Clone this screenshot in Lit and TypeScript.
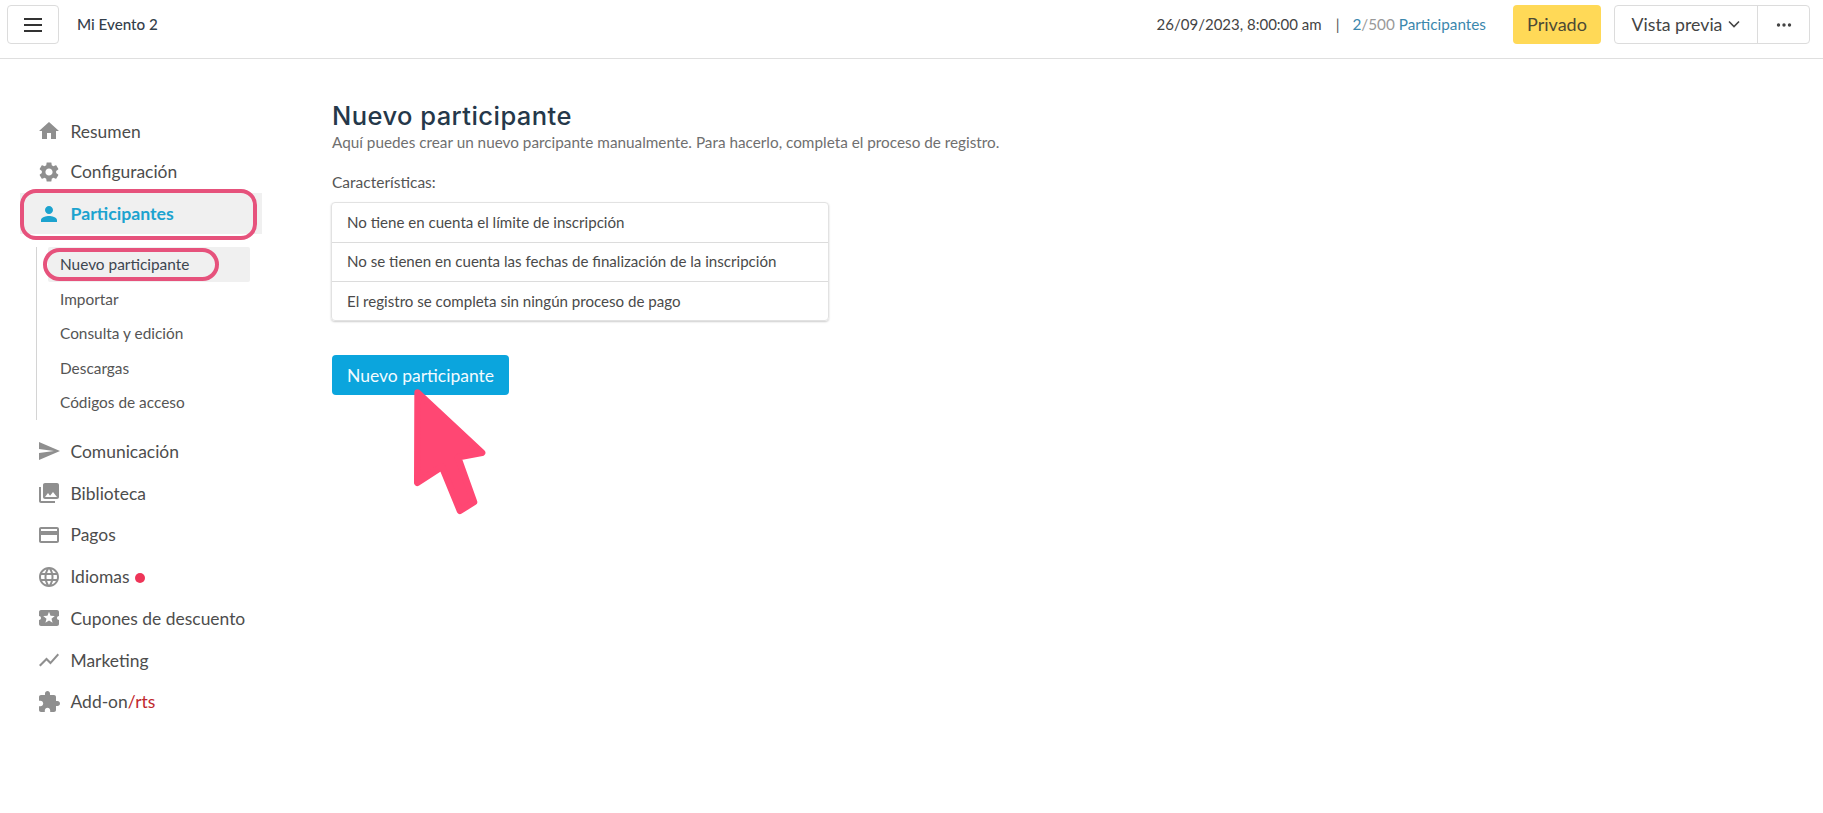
import { LitElement, html, css, svg } from "lit";
import { customElement } from "lit/decorators.js";

const ICONS: Record<string, string> = {
  home: "M10 20v-6h4v6h5v-8h3L12 3 2 12h3v8z",
  settings: "M19.14 12.94c.04-.3.06-.61.06-.94 0-.32-.02-.64-.07-.94l2.03-1.58c.18-.14.23-.41.12-.61l-1.92-3.32c-.12-.22-.37-.29-.59-.22l-2.39.96c-.5-.38-1.03-.7-1.62-.94l-.36-2.54c-.04-.24-.24-.41-.48-.41h-3.84c-.24 0-.43.17-.47.41l-.36 2.54c-.59.24-1.13.57-1.62.94l-2.39-.96c-.22-.08-.47 0-.59.22L2.74 8.87c-.12.21-.08.47.12.61l2.03 1.58c-.05.3-.09.63-.09.94s.02.64.07.94l-2.03 1.58c-.18.14-.23.41-.12.61l1.92 3.32c.12.22.37.29.59.22l2.39-.96c.5.38 1.03.7 1.62.94l.36 2.54c.05.24.24.41.48.41h3.84c.24 0 .44-.17.47-.41l.36-2.54c.59-.24 1.13-.56 1.62-.94l2.39.96c.22.08.47 0 .59-.22l1.92-3.32c.12-.22.07-.47-.12-.61l-2.01-1.58zM12 15.6c-1.98 0-3.6-1.62-3.6-3.6s1.62-3.6 3.6-3.6 3.6 1.62 3.6 3.6-1.62 3.6-3.6 3.6z",
  person: "M12 12c2.21 0 4-1.79 4-4s-1.79-4-4-4-4 1.79-4 4 1.79 4 4 4zm0 2c-2.67 0-8 1.34-8 4v2h16v-2c0-2.66-5.33-4-8-4z",
  send: "M2.01 21L23 12 2.01 3 2 10l15 2-15 2z",
  library: "M22 16V4c0-1.1-.9-2-2-2H8c-1.1 0-2 .9-2 2v12c0 1.1.9 2 2 2h12c1.1 0 2-.9 2-2zm-11-4l2.03 2.71L16 11l4 5H8l3-4zM2 6v14c0 1.1.9 2 2 2h14v-2H4V6H2z",
  card: "M20 4H4c-1.11 0-1.99.89-1.99 2L2 18c0 1.11.89 2 2 2h16c1.11 0 2-.89 2-2V6c0-1.11-.89-2-2-2zm0 14H4v-6h16v6zm0-10H4V6h16v2z",
  globe: "M11.99 2C6.47 2 2 6.48 2 12s4.47 10 9.99 10C17.52 22 22 17.52 22 12S17.52 2 11.99 2zm6.93 6h-2.95c-.32-1.25-.78-2.45-1.38-3.56 1.84.63 3.37 1.91 4.33 3.56zM12 4.04c.83 1.2 1.48 2.53 1.91 3.96h-3.82c.43-1.43 1.08-2.76 1.91-3.96zM4.26 14C4.1 13.36 4 12.69 4 12s.1-1.36.26-2h3.38c-.08.66-.14 1.32-.14 2 0 .68.06 1.34.14 2H4.26zm.82 2h2.95c.32 1.25.78 2.45 1.38 3.56-1.84-.63-3.37-1.9-4.33-3.56zm2.95-8H5.08c.96-1.66 2.49-2.93 4.33-3.56C8.81 5.55 8.35 6.75 8.03 8zM12 19.96c-.83-1.2-1.48-2.53-1.91-3.96h3.82c-.43 1.43-1.08 2.76-1.91 3.96zM14.34 14H9.66c-.09-.66-.16-1.32-.16-2 0-.68.07-1.35.16-2h4.68c.09.65.16 1.32.16 2 0 .68-.07 1.34-.16 2zm.25 5.56c.6-1.11 1.06-2.31 1.38-3.56h2.95c-.96 1.65-2.49 2.93-4.33 3.56zM16.36 14c.08-.66.14-1.32.14-2 0-.68-.06-1.34-.14-2h3.38c.16.64.26 1.31.26 2s-.1 1.36-.26 2h-3.38z",
  ticket: "M20 12c0-1.1.9-2 2-2V6c0-1.1-.9-2-2-2H4c-1.1 0-1.99.9-1.99 2v4c1.1 0 1.99.9 1.99 2s-.89 2-2 2v4c0 1.1.9 2 2 2h16c1.1 0 2-.9 2-2v-4c-1.1 0-2-.9-2-2zm-4.42 4.8L12 14.5l-3.58 2.3 1.08-4.12-3.29-2.69 4.24-.25L12 5.8l1.54 3.95 4.24.25-3.29 2.69 1.09 4.11z",
  chart: "M3.5 18.49l6-6.01 4 4L22 6.92l-1.41-1.41-7.09 7.97-4-4L2 16.99z",
  puzzle: "M20.5 11H19V7c0-1.1-.9-2-2-2h-4V3.5C13 2.12 11.88 1 10.5 1S8 2.12 8 3.5V5H4c-1.1 0-1.99.9-1.99 2v3.8H3.5c1.49 0 2.7 1.21 2.7 2.7s-1.21 2.7-2.7 2.7H2V20c0 1.1.9 2 2 2h3.8v-1.5c0-1.49 1.21-2.7 2.7-2.7 1.49 0 2.7 1.21 2.7 2.7V22H17c1.1 0 2-.9 2-2v-4h1.5c1.38 0 2.5-1.12 2.5-2.5S21.88 11 20.5 11z",
};

const icon = (n: string) => html`<svg class="ico" viewBox="0 0 24 24"><path d=${ICONS[n]}></path></svg>`;

@customElement("app-root")
export class AppRoot extends LitElement {
  static styles = css`
    :host {
      display: block;
      position: relative;
      width: 1823px;
      height: 813px;
      overflow: hidden;
      background: #fff;
      font-family: Lato, "Liberation Sans", sans-serif;
      color: #4a4a4a;
    }
    .top {
      display: flex;
      align-items: flex-start;
      height: 59px;
      box-sizing: border-box;
      border-bottom: 1px solid #dfdfdf;
      padding: 5px 13px 0 7px;
    }
    .burger {
      width: 52px;
      height: 39px;
      box-sizing: border-box;
      border: 1px solid #dcdcdc;
      border-radius: 4px;
      display: flex;
      align-items: center;
      justify-content: center;
      margin-right: 18px;
    }
    .burger svg { width: 20px; height: 16px; }
    .mid { display: flex; align-items: center; height: 38px; }
    .event { font-size: 15.2px; font-weight: 500; color: #34404b; flex: 1; }
    .date { font-size: 15px; color: #444; }
    .sep { font-size: 15px; color: #555; margin: 0 13px 0 14px; }
    .count { font-size: 15.3px; color: #3b87ad; margin-right: 27px; }
    .count span { color: #999; }
    .priv {
      width: 88px;
      height: 39px;
      padding-bottom: 1px;
      box-sizing: border-box;
      background: #ffd957;
      border-radius: 4px;
      display: flex;
      align-items: center;
      justify-content: center;
      font-size: 18px;
      color: #4c4a35;
      margin-right: 13px;
    }
    .group {
      display: flex;
      height: 39px;
      box-sizing: border-box;
      border: 1px solid #dcdcdc;
      border-radius: 4px;
      font-size: 17.7px;
      color: #444;
    }
    .vista {
      width: 143px;
      padding-bottom: 1px;
      box-sizing: border-box;
      display: flex;
      align-items: center;
      justify-content: center;
      gap: 6px;
      border-right: 1px solid #dcdcdc;
    }
    .vista svg { width: 12px; height: 8px; }
    .more { width: 51px; display: flex; align-items: center; justify-content: center; }
    .more svg { width: 16px; height: 4px; }

    .body { display: flex; }
    .side { width: 332px; flex: none; padding-top: 52px; box-sizing: border-box; }
    .item {
      display: flex;
      align-items: center;
      height: 41.75px;
      padding-left: 37px;
      font-size: 17.45px;
      color: #4d4d4d;
    }
    .item.h40 { height: 40.5px; }
    .item.h41 { height: 40.5px; }
    .ico { width: 24px; height: 24px; fill: #8f8f8f; margin-right: 9.5px; flex: none; }
    .item.active {
      position: relative;
      height: 41px;
      margin: 1px 0 0 20px;
      width: 242px;
      padding-left: 17px;
      background: #f0f0f0;
      color: #1ca3cf;
      font-weight: 700;
      font-size: 17.7px;
      box-sizing: border-box;
    }
    .item.active .ico { fill: #1ca3cf; }
    .item.active::after {
      content: "";
      position: absolute;
      left: 0;
      right: 5px;
      top: -4px;
      bottom: -6px;
      border: 4px solid #e6527c;
      border-radius: 16px;
    }
    .subs {
      margin: 13px 0 11px 36px;
      border-left: 1px solid #d4d4d4;
      width: 214px;
      padding-left: 11px;
    }
    .sub {
      position: relative;
      height: 34.5px;
      display: flex;
      align-items: center;
      padding-left: 12px;
      font-size: 15.4px;
      color: #555;
      width: 202px;
      box-sizing: border-box;
    }
    .sub.on { background: #f0f0f0; color: #3d4650; border-radius: 2px; }
    .sub.on::after {
      content: "";
      position: absolute;
      left: -5px;
      width: 176px;
      top: 1px;
      height: 33px;
      box-sizing: border-box;
      border: 4px solid #e6527c;
      border-radius: 17px;
    }
    .dot {
      width: 10px;
      height: 10px;
      border-radius: 50%;
      background: #ee3558;
      margin-left: 5px;
      margin-top: 2px;
    }
    .red { color: #c0272d; }

    .main { padding-top: 43px; }
    h1 {
      margin: 0;
      font: 500 25.5px/28px Inter, "Open Sans", sans-serif;
      letter-spacing: 0.45px;
      color: #25384a;
    }
    .lead { font-size: 15.3px; color: #6f6f6f; line-height: 17px; margin-top: 4px; }
    .lab { font-size: 15.5px; color: #555; line-height: 18px; margin-top: 22px; }
    .list {
      width: 498px;
      margin-top: 11px;
      margin-left: -1px;
      border: 1px solid #e2e2e2;
      border-radius: 4px;
      box-shadow: 0 1px 2px rgba(0, 0, 0, 0.2);
      box-sizing: border-box;
    }
    .row {
      height: 39px;
      padding-bottom: 2px;
      display: flex;
      align-items: center;
      padding-left: 15px;
      font-size: 15.1px;
      color: #4a4a4a;
      border-top: 1px solid #dcdcdc;
      box-sizing: border-box;
    }
    .row:first-child { border-top: 0; }
    .row:last-child { padding-bottom: 0; }
    .cta {
      margin-top: 34px;
      width: 177px;
      height: 40px;
      background: #0ba5dd;
      border-radius: 4px;
      color: #f2fbff;
      font-size: 17.5px;
      display: flex;
      align-items: center;
      justify-content: center;
    }
    .cursor {
      position: absolute;
      left: 320px;
      top: 340px;
      width: 220px;
      height: 190px;
    }
  `;

  render() {
    return html`
      <div class="top">
        <div class="burger">
          <svg viewBox="0 0 20 16"><path d="M1 2h18M1 8h18M1 14h18" stroke="#333" stroke-width="2" fill="none"></path></svg>
        </div>
        <div class="mid event">Mi Evento 2</div>
        <div class="mid date">26/09/2023, 8:00:00 am</div>
        <div class="mid sep">|</div>
        <div class="mid count">2<span>/500</span>&nbsp;Participantes</div>
        <div class="priv">Privado</div>
        <div class="group">
          <div class="vista">Vista previa
            <svg viewBox="0 0 12 8"><path d="M1 1.5l5 5 5-5" stroke="#444" stroke-width="1.6" fill="none"></path></svg>
          </div>
          <div class="more">
            <svg viewBox="0 0 16 4"><circle cx="2.5" cy="2" r="1.7" fill="#444"></circle><circle cx="8" cy="2" r="1.7" fill="#444"></circle><circle cx="13.5" cy="2" r="1.7" fill="#444"></circle></svg>
          </div>
        </div>
      </div>
      <div class="body">
        <nav class="side">
          <div class="item h40">${icon("home")}Resumen</div>
          <div class="item h41">${icon("settings")}Configuración</div>
          <div class="item active">${icon("person")}Participantes</div>
          <div class="subs">
            <div class="sub on">Nuevo participante</div>
            <div class="sub">Importar</div>
            <div class="sub">Consulta y edición</div>
            <div class="sub">Descargas</div>
            <div class="sub">Códigos de acceso</div>
          </div>
          <div class="item">${icon("send")}Comunicación</div>
          <div class="item">${icon("library")}Biblioteca</div>
          <div class="item">${icon("card")}Pagos</div>
          <div class="item">${icon("globe")}Idiomas<span class="dot"></span></div>
          <div class="item">${icon("ticket")}Cupones de descuento</div>
          <div class="item">${icon("chart")}Marketing</div>
          <div class="item">${icon("puzzle")}Add-on<span class="red">/rts</span></div>
        </nav>
        <main class="main">
          <h1>Nuevo participante</h1>
          <div class="lead">Aquí puedes crear un nuevo parcipante manualmente. Para hacerlo, completa el proceso de registro.</div>
          <div class="lab">Características:</div>
          <div class="list">
            <div class="row">No tiene en cuenta el límite de inscripción</div>
            <div class="row">No se tienen en cuenta las fechas de finalización de la inscripción</div>
            <div class="row">El registro se completa sin ningún proceso de pago</div>
          </div>
          <div class="cta">Nuevo participante</div>
        </main>
      </div>
      <svg class="cursor" viewBox="0 0 660 570">
        ${svg`<polygon points="293,158 486,338 414,352 462,486 420,512 366,380 292,428" fill="#ff4773" stroke="#ff4773" stroke-width="20" stroke-linejoin="round"></polygon>`}
      </svg>
    `;
  }
}
